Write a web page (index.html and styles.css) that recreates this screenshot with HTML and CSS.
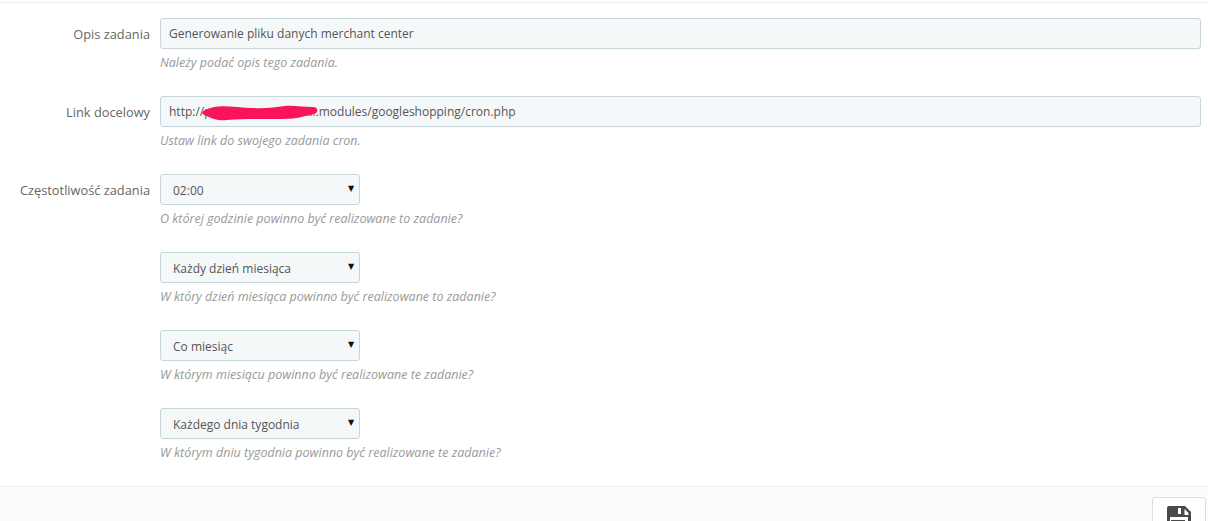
FILE: index.html
```html
<!DOCTYPE html>
<html lang="pl">
<head>
<meta charset="utf-8">
<title>Zadanie cron</title>
<link rel="stylesheet" href="styles.css">
</head>
<body>
<div class="panel">
  <form class="form">
    <div class="row">
      <label class="label">Opis zadania</label>
      <div class="field">
        <input class="input" type="text" value="Generowanie pliku danych merchant center">
        <p class="help">Należy podać opis tego zadania.</p>
      </div>
    </div>
    <div class="row">
      <label class="label">Link docelowy</label>
      <div class="field">
        <div class="link-wrap">
          <input class="input" type="text" value="http://p..................................modules/googleshopping/cron.php">
          <svg class="scribble" width="118" height="18" viewBox="0 0 118 18"><path d="M1 9C2 6 6 5 13 3C24 1 38 4 52 4C64 5 74 3 84 2C92 1 102 3 112 3C116 3 117 6 116 8C114 11 108 11 104 12C96 15 84 15 72 15C56 15 40 15 26 16C18 17 12 15 8 13C5 12 2 11 1 9Z" fill="#f9135a"/></svg>
        </div>
        <p class="help">Ustaw link do swojego zadania cron.</p>
      </div>
    </div>
    <div class="row">
      <label class="label">Częstotliwość zadania</label>
      <div class="field">
        <div class="select"><span>02:00</span><i class="arrow">▼</i></div>
        <p class="help">O której godzinie powinno być realizowane to zadanie?</p>
      </div>
    </div>
    <div class="row">
      <div class="label"></div>
      <div class="field">
        <div class="select"><span>Każdy dzień miesiąca</span><i class="arrow">▼</i></div>
        <p class="help">W który dzień miesiąca powinno być realizowane to zadanie?</p>
      </div>
    </div>
    <div class="row">
      <div class="label"></div>
      <div class="field">
        <div class="select"><span>Co miesiąc</span><i class="arrow">▼</i></div>
        <p class="help">W którym miesiącu powinno być realizowane te zadanie?</p>
      </div>
    </div>
    <div class="row">
      <div class="label"></div>
      <div class="field">
        <div class="select"><span>Każdego dnia tygodnia</span><i class="arrow">▼</i></div>
        <p class="help">W którym dniu tygodnia powinno być realizowane te zadanie?</p>
      </div>
    </div>
  </form>
  <div class="footer">
    <button class="save" type="button">
      <svg width="24" height="24" viewBox="0 0 24 24"><path fill="#4a4a4a" fill-rule="evenodd" d="M2 0h16l6 6v16a2 2 0 0 1-2 2H2a2 2 0 0 1-2-2V2a2 2 0 0 1 2-2ZM11 2v6h3V2ZM17.500 3v6h4V7ZM3 11v11h18V11Z"/><rect x="4" y="14" width="14" height="1.500" fill="#4a4a4a"/></svg>
    </button>
  </div>
</div>
</body>
</html>
```
FILE: styles.css
```css
* { box-sizing: border-box; }
html, body { margin: 0; height: 100%; overflow: hidden; background: #fff; }
body { font-family: "Open Sans", sans-serif; font-size: 12px; color: #555; }
.panel { height: 521px; border-top: 1px solid #eee; margin-top: 2px; display: flex; flex-direction: column; overflow: hidden; }
.form { padding-top: 15px; height: 483px; flex: none; }
.row { display: grid; grid-template-columns: 150px 1fr; column-gap: 10px; height: 78px; padding-right: 7px; }
.label { text-align: right; line-height: 32px; color: #666; font-size: 12.8px; }
.input { display: block; width: 100%; height: 31px; padding: 0 8px; border: 1px solid #c7d6db; border-radius: 3px; background: #f5f8f9; font: 12px "Open Sans", sans-serif; color: #555; outline: none; }
.help { margin: 5px 0 0; font-size: 12.5px; line-height: 18px; font-style: italic; color: #999; }
.link-wrap { position: relative; }
.scribble { position: absolute; left: 41px; top: 8px; }
.select { position: relative; width: 200px; height: 31px; padding: 0 12px; border: 1px solid #c7d6db; border-radius: 3px; background: #f5f8f9; line-height: 31px; color: #555; }
.arrow { position: absolute; right: 1px; top: 0; font-style: normal; font-size: 8px; line-height: 27px; color: #111; width: 14px; text-align: center; font-family: "DejaVu Sans", sans-serif; }
.footer { flex: 1; background: #fbfcfd; border-top: 1px solid #eee; padding: 10px 2px 0 0; display: flex; justify-content: flex-end; }
.save { width: 54px; height: 60px; padding: 8px 0 0; background: #fff; border: 1px solid #ddd; border-radius: 3px; display: flex; justify-content: center; align-items: flex-start; }
.save svg { display: block; }
```
